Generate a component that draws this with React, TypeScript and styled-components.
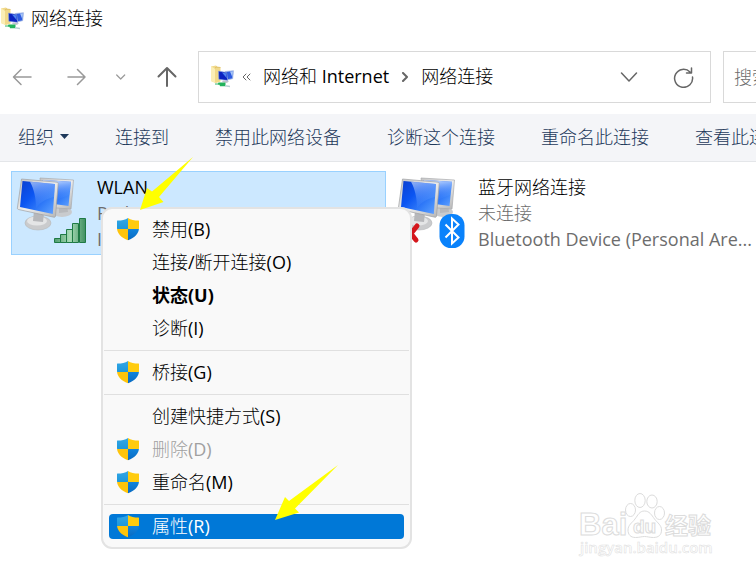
import React, { ReactNode } from "react";
import styled, { createGlobalStyle, css } from "styled-components";

const Global = createGlobalStyle`
  * { box-sizing: border-box; }
  html, body { margin: 0; background: #fff; overflow: hidden; }
  body, button, input {
    font-family: "Open Sans", "Noto Sans CJK SC Light", "Noto Sans CJK SC", sans-serif;
    font-size: 18px;
    line-height: 26px;
    color: #000;
  }
  button { margin: 0; padding: 0; border: 0; background: none; text-align: left; white-space: nowrap; }
`;

const Window = styled.div`
  position: relative;
  min-height: 100vh;
  overflow: hidden;
`;

const TitleBar = styled.header`
  display: flex;
  align-items: center;
  gap: 7px;
  height: 38px;
`;

const Title = styled.h1`
  margin: 0;
  padding-bottom: 2px;
  font-size: 18px;
  font-weight: 400;
`;

const NavBar = styled.nav`
  display: flex;
  align-items: center;
  height: 76px;
  padding-top: 2px;
`;

const NavButtons = styled.div`
  display: flex;
  flex: none;
  align-items: center;
  gap: 30px;
  width: 198px;
  padding-left: 12px;
`;

const IconButton = styled.button`
  display: flex;
  flex: none;
`;

const AddressBox = styled.div`
  display: flex;
  flex: none;
  align-items: center;
  width: calc(100% - 243px);
  height: 52px;
  padding: 0 16px 0 11px;
  border: 1px solid #d9d9d9;
`;

const Crumbs = styled.div`
  display: flex;
  flex: 1;
  align-items: center;
  gap: 12px;
  padding-left: 8px;
`;

const Crumb = styled.span`
  padding-bottom: 2px;
`;

const SearchBox = styled.input`
  flex: none;
  width: 240px;
  height: 52px;
  margin-left: 12px;
  padding: 0 10px;
  border: 1px solid #d9d9d9;
  outline: none;
  &::placeholder { color: #6d6d6d; opacity: 1; }
`;

const CommandBar = styled.div`
  display: flex;
  align-items: center;
  gap: 46px;
  height: 48px;
  padding: 0 0 2px 18px;
  border-bottom: 1px solid #e4e6e9;
  background: #f4f5f8;
`;

const Command = styled.button`
  display: flex;
  flex: none;
  align-items: center;
  gap: 6px;
  color: #1e395b;
`;

const Connections = styled.main`
  display: flex;
  gap: 6px;
  padding: 9px 0 0 11px;
`;

const Tile = styled.article<{ $selected?: boolean }>`
  display: flex;
  flex: none;
  width: 375px;
  height: 84px;
  border: 1px solid ${(p) => (p.$selected ? "#99d1ff" : "transparent")};
  background: ${(p) => (p.$selected ? "#cce8ff" : "transparent")};
`;

const TileIcon = styled.div`
  flex: none;
  width: 85px;
`;

const TileText = styled.div`
  display: flex;
  flex-direction: column;
  padding-top: 2px;
  white-space: nowrap;
`;

const Line = styled.span<{ $muted?: boolean }>`
  color: ${(p) => (p.$muted ? "#6d6d6d" : "#000")};
`;

const Menu = styled.div`
  position: absolute;
  top: 207px;
  left: 101px;
  display: flex;
  flex-direction: column;
  width: 311px;
  padding: 4px 0;
  border: 2px solid #e3e3e3;
  border-radius: 11px;
  background: #f9f9f9;
`;

const MenuItem = styled.button<{ $active?: boolean; $bold?: boolean }>`
  display: flex;
  align-items: center;
  height: 25px;
  margin: 4px 6px;
  border-radius: 4px;
  ${(p) => p.$bold && css`font-family: "Open Sans", "Noto Sans CJK SC", sans-serif; font-weight: 700;`}
  ${(p) => p.$active && css`background: #0078d7; color: #fff;`}
  &:disabled { color: #a0a0a0; }
`;

const MenuLabel = styled.span`
  padding-bottom: 2px;
  color: inherit;
`;

const IconSlot = styled.span`
  display: flex;
  flex: none;
  width: 43px;
  padding: 0 0 2px 7px;
`;

const MenuDivider = styled.hr`
  height: 1px;
  margin: 5px 1px;
  border: 0;
  background: #e0e0e0;
`;

const Arrow = styled.svg<{ $x: number; $y: number }>`
  position: absolute;
  left: ${(p) => p.$x}px;
  top: ${(p) => p.$y}px;
  pointer-events: none;
`;

const Watermark = styled.svg`
  position: absolute;
  left: 572px;
  top: 486px;
  font-weight: 700;
`;

const Stroke = ({ w, h, d, color, sw = 1.5 }: { w: number; h: number; d: string; color: string; sw?: number }) => (
  <svg width={w} height={h} viewBox={`0 0 ${w} ${h}`} fill="none" stroke={color} strokeWidth={sw} strokeLinecap="round" strokeLinejoin="round">
    <path d={d} />
  </svg>
);

const FolderIcon = () => (
  <svg width="24" height="24" viewBox="0 0 24 24">
    <path d="M1 1.500l5-1 1.500 1.500 3 .5v14L6 18l-5-2z" fill="#f1d98a" />
    <path d="M1 1.500l4 2V18l-4-2z" fill="#fbeeb5" />
    <path d="M5 3.500l1-1.500 4.500.5" fill="none" stroke="#d9b95a" strokeWidth=".8" />
    <path d="M15 6.500l8.500-.8-.8 8-5 1z" fill="#2c5be0" stroke="#b4c4e4" strokeWidth=".8" />
    <path d="M20 6.500l3-.3-.6 6z" fill="#a9c6f6" />
    <path d="M8.500 6l8 1.500 1.300 8-9-1.200z" fill="#0a22c0" stroke="#8fa8dd" strokeWidth=".6" />
    <path d="M12 7.500l4 .8.8 5z" fill="#4d84f0" />
    <path d="M13 15.500l6 .5-2 2-5-1z" fill="#c0c4cc" />
    <path d="M5 18.500h3l.5-1h7v3.800H10l-.5-1.500H5z" fill="#22b35c" />
    <path d="M5 18.500h3v1.300H5z" fill="#a8dcc0" />
    <path d="M15 20l5 .8v1.500l-5-.8z" fill="#b7cfd2" />
  </svg>
);

const Shield = () => (
  <svg width="24" height="24" viewBox="0 0 24 24">
    <defs>
      <clipPath id="shield">
        <path d="M12 1c2.800 1.800 6.300 2.600 10.300 2.600.6 0 .7.300.7.900v6.300c0 6-4.200 9.700-11 12.500C5.200 20.500 1 16.800 1 10.800V4.500c0-.6.100-.9.700-.9C5.700 3.600 9.200 2.800 12 1z" />
      </clipPath>
      <linearGradient id="shieldBlue" x2="0" y2="1"><stop stopColor="#35a8e6" /><stop offset="1" stopColor="#1d98dc" /></linearGradient>
      <linearGradient id="shieldDeep" x2="0" y2="1"><stop stopColor="#1184dc" /><stop offset="1" stopColor="#0868c0" /></linearGradient>
    </defs>
    <g clipPath="url(#shield)">
      <path d="M0 0h12v12H0z" fill="url(#shieldBlue)" />
      <path d="M12 0h12v12H12z" fill="#ffcb0d" />
      <path d="M0 12h12v12H0z" fill="#fec40c" />
      <path d="M12 12h12v12H12z" fill="url(#shieldDeep)" />
    </g>
  </svg>
);

const Monitors = ({ children }: { children: ReactNode }) => (
  <svg width="78" height="82" viewBox="0 0 78 82">
    <defs>
      <linearGradient id="screen" x1="0" y1="0" x2="1" y2=".9"><stop stopColor="#0b3fd0" /><stop offset=".4" stopColor="#0b55f2" /><stop offset=".8" stopColor="#3d86fa" /><stop offset="1" stopColor="#5a9cff" /></linearGradient>
      <linearGradient id="glare" x1=".3" y1="0" x2=".6" y2="1"><stop stopColor="#e4f0ff" stopOpacity=".95" /><stop offset="1" stopColor="#4a90ff" stopOpacity=".1" /></linearGradient>
      <linearGradient id="bezel" x1="0" y1="0" x2="1" y2="1"><stop stopColor="#c4c4c4" /><stop offset=".5" stopColor="#eee" /><stop offset="1" stopColor="#b4b4b4" /></linearGradient>
      <linearGradient id="bars" x1="0" x2="1"><stop stopColor="#4f9c6e" /><stop offset=".5" stopColor="#a8dcb6" /><stop offset="1" stopColor="#3f8f60" /></linearGradient>
    </defs>
    <ellipse cx="50" cy="40" rx="10" ry="5" fill="#c9cbce" />
    <path d="M47 32h8l1 8-9 1z" fill="#b8b9bc" />
    <path d="M28 6l33.500 2L59 37l-28-2z" fill="url(#bezel)" stroke="#a9abae" strokeWidth=".7" />
    <path d="M30 8l29 1.800L56.500 34 42 32z" fill="url(#screen)" />
    <path d="M30 8l29 1.800-1.400 13L44 28z" fill="url(#glare)" />
    <ellipse cx="26" cy="51" rx="13" ry="7" fill="#cacbcd" stroke="#b7b8ba" strokeWidth=".6" />
    <ellipse cx="25" cy="49" rx="10" ry="4.500" fill="#e4e5e6" />
    <path d="M22 38l10 3-1 9-10-1z" fill="#b6b7ba" />
    <path d="M9.500 7l35.500 3.200c1 .1 1.300.7 1.200 1.600L43.500 44c-.1 1-.7 1.400-1.600 1.200L6.500 37.500c-.9-.2-1.200-.7-1.100-1.600z" fill="url(#bezel)" stroke="#9fa1a4" strokeWidth=".7" />
    <path d="M10.500 9l32.500 3L40.800 42 8 35z" fill="url(#screen)" />
    <path d="M18 9.700l25 2.300-1 13C34 27 28 30 24 36c0-10-2-19-6-26.300z" fill="url(#glare)" opacity=".6" />
    {children}
  </svg>
);

const SignalBars = () => (
  <g fill="url(#bars)" stroke="#1f7a45" strokeWidth="1">
    <path d="M42.500 66.500h6v4h-6zM48.500 62.500h6v8h-6zM54.500 57.500h6v13h-6zM60.500 51.500h6v19h-6zM67.500 46.500h6v24h-6z" />
  </g>
);

const BluetoothBadge = () => (
  <g>
    <path d="M11 53l12 15M24 54L12 69" stroke="#d4161c" strokeWidth="5" strokeLinecap="round" />
    <rect x="46.500" y="42" width="25" height="34" rx="11.500" fill="#0a82fb" />
    <path d="M52.500 52.500l13 13-6.500 6v-25l6.500 6-13 13" fill="none" stroke="#fff" strokeWidth="2" />
  </g>
);

const menu = [
  { label: "禁用(B)", shield: true },
  { label: "连接/断开连接(O)" },
  { label: "状态(U)", bold: true },
  { label: "诊断(I)" },
  null,
  { label: "桥接(G)", shield: true },
  null,
  { label: "创建快捷方式(S)" },
  { label: "删除(D)", shield: true, disabled: true },
  { label: "重命名(M)", shield: true },
  null,
  { label: "属性(R)", shield: true, active: true },
];

export default function App() {
  return (
    <Window>
      <Global />
      <TitleBar>
        <FolderIcon />
        <Title>网络连接</Title>
      </TitleBar>
      <NavBar>
        <NavButtons>
          <IconButton aria-label="后退"><Stroke w={24} h={20} color="#999" d="M19 10H2M9 2.500L1.500 10 9 17.500" /></IconButton>
          <IconButton aria-label="前进"><Stroke w={20} h={20} color="#999" d="M2 10h17M11.500 2.500L19 10l-7.500 7.500" /></IconButton>
          <IconButton aria-label="最近位置"><Stroke w={11} h={8} color="#999" sw={1.2} d="M.7 2l4 4 4-4" /></IconButton>
          <IconButton aria-label="上移"><Stroke w={20} h={22} color="#666" sw={2} d="M10 20V2M1.500 10.500L10 2l8.500 8.500" /></IconButton>
        </NavButtons>
        <AddressBox>
          <FolderIcon />
          <Crumbs>
            <Stroke w={9} h={8} color="#666" sw={1} d="M4 1L1 4l3 3M8 1L5 4l3 3" />
            <Crumb>网络和 Internet</Crumb>
            <Stroke w={8} h={10} color="#666" sw={2} d="M2 1l4 4-4 4" />
            <Crumb>网络连接</Crumb>
          </Crumbs>
          <IconButton aria-label="展开"><Stroke w={18} h={12} color="#666" d="M1.500 2L9 10l7.500-8" /></IconButton>
          <IconButton aria-label="刷新">
            <Stroke w={56} h={22} color="#666" d="M52 6A9 9 0 1 0 54.500 11M53.500 2v5h-5" />
          </IconButton>
        </AddressBox>
        <SearchBox aria-label="搜索" placeholder="搜索网络连接" />
      </NavBar>
      <CommandBar>
        <Command>组织 <svg width="9" height="5" viewBox="0 0 9 5"><path d="M0 0h9L4.500 5z" fill="#1e395b" /></svg></Command>
        <Command>连接到</Command>
        <Command>禁用此网络设备</Command>
        <Command>诊断这个连接</Command>
        <Command>重命名此连接</Command>
        <Command>查看此连接的状态</Command>
      </CommandBar>
      <Connections>
        <Tile $selected>
          <TileIcon><Monitors><SignalBars /></Monitors></TileIcon>
          <TileText>
            <Line>WLAN</Line>
            <Line $muted>Redmi</Line>
            <Line $muted>Intel(R) Wi-Fi</Line>
          </TileText>
        </Tile>
        <Tile>
          <TileIcon><Monitors><BluetoothBadge /></Monitors></TileIcon>
          <TileText>
            <Line>蓝牙网络连接</Line>
            <Line $muted>未连接</Line>
            <Line $muted>Bluetooth Device (Personal Are...</Line>
          </TileText>
        </Tile>
      </Connections>
      <Menu role="menu">
        {menu.map((m, i) =>
          m ? (
            <MenuItem key={i} role="menuitem" disabled={m.disabled} $active={m.active} $bold={m.bold}>
              <IconSlot>{m.shield && <Shield />}</IconSlot>
              <MenuLabel>{m.label}</MenuLabel>
            </MenuItem>
          ) : (
            <MenuDivider key={i} />
          )
        )}
      </Menu>
      <Arrow $x={138} $y={154} width="58" height="58" viewBox="0 0 58 58"><path d="M55 3L21 43l4.500 5L2 56 9 34l5 3.500z" fill="#ff0" /></Arrow>
      <Arrow $x={274} $y={464} width="66" height="58" viewBox="0 0 66 58"><path d="M64 1L21 44.500l4 4L1 56 11 33l4 4z" fill="#ff0" /></Arrow>
      <Watermark width="150" height="78" viewBox="0 0 150 78" fill="#fff" stroke="#dcdcdc" strokeWidth="1">
        <text x="7" y="49" fontSize="31" fontFamily="Liberation Sans">Bai</text>
        <ellipse cx="58.500" cy="24" rx="5" ry="6.500" />
        <ellipse cx="68" cy="14.500" rx="5.200" ry="7" />
        <ellipse cx="80" cy="15.500" rx="5.200" ry="6.500" />
        <ellipse cx="87.500" cy="27" rx="5" ry="6.500" />
        <path d="M72.500 25c5 0 7 4 10 8s7 6 7 11-3 7.500-8 7.500c-4 0-6-1-9-1s-5 1-9 1c-5 0-7.500-3-7.500-7.500 0-5 4-7 7-11s4.500-8 9.500-8z" />
        <text x="61" y="47" fontSize="19" fontFamily="Liberation Sans">du</text>
        <text x="93" y="48" fontSize="23" fontFamily="Noto Sans CJK SC">经验</text>
        <text x="8" y="67" fontSize="15" strokeWidth=".5" fontWeight="600" fontFamily="Open Sans">jingyan.baidu.com</text>
      </Watermark>
    </Window>
  );
}
